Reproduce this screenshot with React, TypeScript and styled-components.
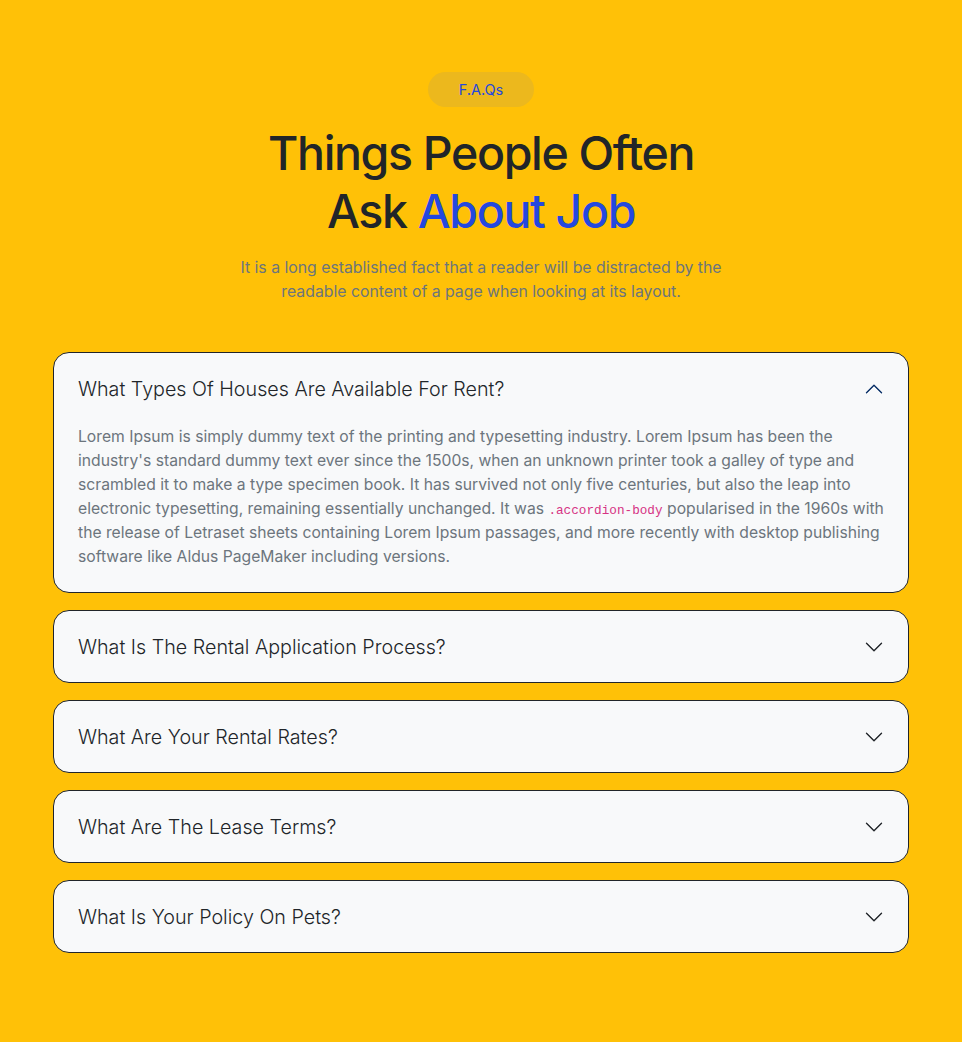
import React, { useState } from 'react';
import styled, { createGlobalStyle } from 'styled-components';

const Colors = {
  YELLOW: '#ffc107',
  BADGE: '#ecb81d',
  BLUE: '#2448df',
  DARK: '#212529',
  GRAY: '#6c757d',
  CARD: '#f8f9fa',
  PINK: '#d63384',
  ACTIVE_ICON: '#052c65',
};

const GlobalStyle = createGlobalStyle`
  * {
    box-sizing: border-box;
  }

  body {
    margin: 0;
    background-color: ${Colors.YELLOW};
    font-family: Inter, 'Noto Sans', sans-serif;
    color: ${Colors.DARK};
  }
`;

export const Section = styled.section`
  min-height: 1042px;
  padding: 72px 53px 60px;
  display: flex;
  flex-direction: column;
  align-items: center;
`;

export const Badge = styled.span`
  width: 106px;
  height: 35px;
  border-radius: 999px;
  background-color: ${Colors.BADGE};
  color: ${Colors.BLUE};
  font-size: 14.5px;
  display: flex;
  align-items: center;
  justify-content: center;
`;

export const Heading = styled.h2`
  margin: 17px 0 0;
  font-size: 46.5px;
  font-weight: 500;
  line-height: 58px;
  letter-spacing: -1.35px;
  text-align: center;
  color: ${Colors.DARK};

  span {
    color: ${Colors.BLUE};
  }
`;

export const Lead = styled.p`
  margin: 16px 0 0;
  max-width: 500px;
  font-size: 15.8px;
  line-height: 24px;
  text-align: center;
  color: ${Colors.GRAY};
`;

export const List = styled.div`
  width: 100%;
  margin-top: 48px;
  display: flex;
  flex-direction: column;
  gap: 17px;
`;

export const Item = styled.div`
  background-color: ${Colors.CARD};
  border: 1px solid ${Colors.DARK};
  border-radius: 16px;
  overflow: hidden;
`;

export const Header = styled.button`
  width: 100%;
  height: 71px;
  padding: 0 24px;
  border: 0;
  background: transparent;
  display: flex;
  align-items: center;
  justify-content: space-between;
  font-family: inherit;
  font-size: 19.7px;
  font-weight: 300;
  color: ${Colors.DARK};
  text-align: left;
  cursor: pointer;
`;

export const Body = styled.div`
  padding: 1px 20px 23px 24px;
  font-size: 15.7px;
  line-height: 24px;
  color: ${Colors.GRAY};

  code {
    font-family: 'Liberation Mono', monospace;
    font-size: 12.7px;
    line-height: 1;
    color: ${Colors.PINK};
  }
`;

interface IconProps {
  isOpen: boolean;
}

export const Icon = styled.span<IconProps>`
  width: 20px;
  height: 20px;
  flex-shrink: 0;
  display: flex;

  svg {
    transform: ${({ isOpen }) => (isOpen ? 'rotate(180deg)' : 'rotate(0)')};
  }
`;

const Chevron: React.FC<IconProps> = ({ isOpen }) => (
  <Icon isOpen={isOpen}>
    <svg width="20" height="20" viewBox="0 0 16 16" fill="none">
      <path
        d="M2 5L8 11L14 5"
        stroke={isOpen ? Colors.ACTIVE_ICON : Colors.DARK}
        strokeWidth="1.1"
        strokeLinecap="round"
        strokeLinejoin="round"
      />
    </svg>
  </Icon>
);

const QUESTIONS = [
  'What Types Of Houses Are Available For Rent?',
  'What Is The Rental Application Process?',
  'What Are Your Rental Rates?',
  'What Are The Lease Terms?',
  'What Is Your Policy On Pets?',
];

const Answer = () => (
  <Body>
    Lorem Ipsum is simply dummy text of the printing and typesetting industry. Lorem Ipsum has been the industry's
    standard dummy text ever since the 1500s, when an unknown printer took a galley of type and scrambled it to make a
    type specimen book. It has survived not only five centuries, but also the leap into electronic typesetting,
    remaining essentially unchanged. It was <code>.accordion-body</code> popularised in the 1960s with the release of
    Letraset sheets containing Lorem Ipsum passages, and more recently with desktop publishing software like Aldus
    PageMaker including versions.
  </Body>
);

export default function App() {
  const [open, setOpen] = useState(0);

  return (
    <>
      <GlobalStyle />
      <Section>
        <Badge>F.A.Qs</Badge>
        <Heading>
          Things People Often
          <br />
          Ask <span>About Job</span>
        </Heading>
        <Lead>
          It is a long established fact that a reader will be distracted by the readable content of a page when looking
          at its layout.
        </Lead>

        <List>
          {QUESTIONS.map((q, i) => (
            <Item key={q}>
              <Header onClick={() => setOpen(open === i ? -1 : i)}>
                {q}
                <Chevron isOpen={open === i} />
              </Header>
              {open === i && <Answer />}
            </Item>
          ))}
        </List>
      </Section>
    </>
  );
}
